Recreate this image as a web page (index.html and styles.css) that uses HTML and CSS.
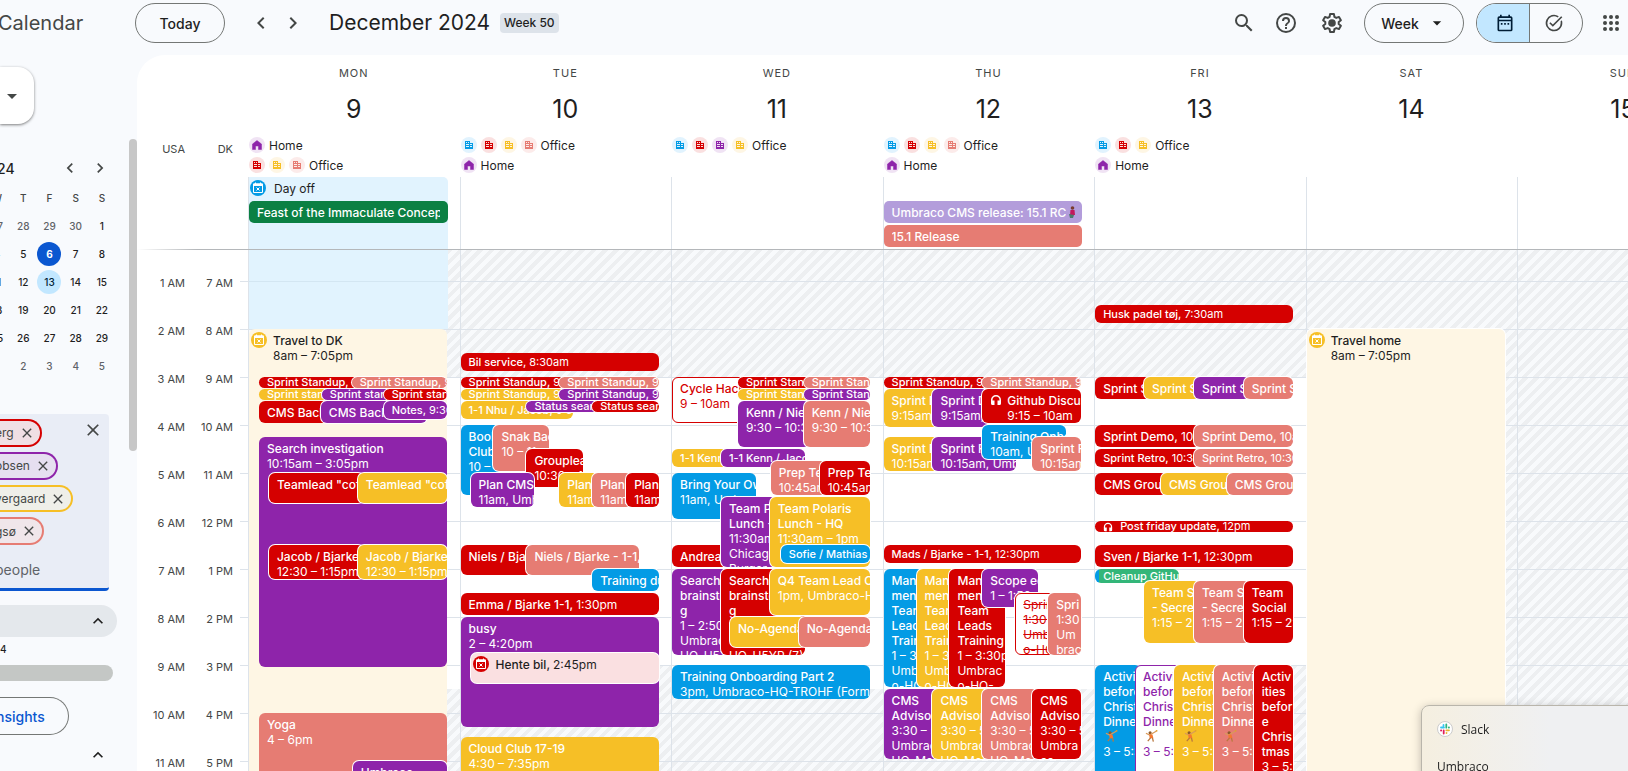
FILE: index.html
```html
<!DOCTYPE html>
<html lang="en">
<head>
<meta charset="utf-8">
<title>Calendar - December 2024</title>
<link rel="stylesheet" href="styles.css">
</head>
<body>
<svg class="defs" aria-hidden="true">
  <symbol id="office" viewBox="0 0 16 16"><path d="M4 4h5v2h3v6H4zM5 5v1h1V5zm2 0v1h1V5zM5 7v1h3V7zm0 2v1h3V9zm4-2v1h2V7zm0 2v1h2V9z" fill-rule="evenodd"/></symbol>
  <symbol id="home" viewBox="0 0 16 16"><path d="M8 3.500 3.500 7v5.500h3V9h3v3.500h3V7z" stroke="currentColor" stroke-width=".5" stroke-linejoin="round"/></symbol>
  <symbol id="away" viewBox="0 0 16 16"><circle cx="8" cy="8" r="8"/><path d="M3.500 4h9v8.500h-9zM5.500 2.500v2M10.500 2.500v2" fill="none" stroke="#fff"/><path d="M3.500 3.500h9V6h-9z" fill="#fff"/><path d="m6.500 7.500 3 3m0-3-3 3" stroke="#fff"/></symbol>
  <symbol id="left" viewBox="0 0 24 24"><path d="M15.410 7.410 14 6l-6 6 6 6 1.410-1.410L10.830 12z"/></symbol>
  <symbol id="right" viewBox="0 0 24 24"><path d="M10 6 8.590 7.410 13.170 12l-4.580 4.590L10 18l6-6z"/></symbol>
  <symbol id="up" viewBox="0 0 24 24"><path d="m12 8-6 6 1.410 1.410L12 10.830l4.590 4.580L18 14z"/></symbol>
  <symbol id="down" viewBox="0 0 24 24"><path d="m7 10 5 5 5-5z"/></symbol>
  <symbol id="close" viewBox="0 0 24 24"><path d="M19 6.410 17.590 5 12 10.590 6.410 5 5 6.410 10.590 12 5 17.590 6.410 19 12 13.410 17.590 19 19 17.590 13.410 12z"/></symbol>
  <symbol id="phones" viewBox="0 0 24 24"><path d="M12 2a10 10 0 0 0-10 10v7a3 3 0 0 0 3 3h4v-9H5v-1a7 7 0 0 1 14 0v1h-4v9h4a3 3 0 0 0 3-3v-7A10 10 0 0 0 12 2z"/></symbol>
  <symbol id="sport" viewBox="0 0 14 14"><circle cx="5.500" cy="4" r="1.700" fill="#8a5a2b"/><path d="M1 4.500 5 6.500 12 2.500" fill="none" stroke="#d99a5b" stroke-width="1.300"/><path d="M4.500 6h3.500l1 4H5z" fill="#f4772e"/><path d="M6 9.500 3 13M8 9.500l1 4" fill="none" stroke="#b9783f" stroke-width="1.400"/><circle cx="12.500" cy="2" r="1" fill="#e0a030"/></symbol>
</svg>

<header class="topbar">
  <span class="brand">Calendar</span>
  <button class="pill today">Today</button>
  <div class="pager">
    <button class="icon" aria-label="Previous week"><svg><use href="#left"/></svg></button>
    <button class="icon" aria-label="Next week"><svg><use href="#right"/></svg></button>
  </div>
  <h1>December 2024</h1>
  <span class="weekno">Week 50</span>
  <div class="tools">
    <button class="icon" aria-label="Search"><svg viewBox="0 0 24 24"><path d="M15.500 14h-.79l-.28-.27A6.470 6.470 0 0 0 16 9.500 6.500 6.500 0 1 0 9.500 16c1.610 0 3.090-.59 4.230-1.570l.27.28v.79l5 4.990L20.490 19zm-6 0a4.500 4.500 0 1 1 0-9 4.500 4.500 0 0 1 0 9z"/></svg></button>
    <button class="icon help" aria-label="Help"><svg viewBox="0 0 24 24"><path d="M11 18h2v-2h-2zm1-16a10 10 0 1 0 0 20 10 10 0 0 0 0-20zm0 18a8 8 0 1 1 0-16 8 8 0 0 1 0 16zm0-14a4 4 0 0 0-4 4h2a2 2 0 1 1 4 0c0 2-3 1.750-3 5h2c0-2.250 3-2.500 3-5a4 4 0 0 0-4-4z"/></svg></button>
    <button class="icon" aria-label="Settings"><svg viewBox="0 0 24 24"><path d="M10.100 3h3.800l.5 2.800 1.900 1.100 2.700-1 1.900 3.300-2.200 1.800v2l2.200 1.800-1.900 3.300-2.700-1-1.900 1.100-.5 2.800h-3.800l-.5-2.800-1.900-1.100-2.700 1-1.900-3.300L5.300 13v-2L3.100 9.200 5 5.900l2.700 1 1.900-1.100z" fill="none" stroke="#444746" stroke-width="2" stroke-linejoin="round"/><circle cx="12" cy="12" r="3.800"/></svg></button>
    <button class="pill view">Week<svg><use href="#down"/></svg></button>
    <div class="switch">
      <button class="on" aria-label="Calendar"><svg viewBox="0 0 24 24"><path d="M19 4h-1V2h-2v2H8V2H6v2H5a2 2 0 0 0-2 2v14a2 2 0 0 0 2 2h14a2 2 0 0 0 2-2V6a2 2 0 0 0-2-2zm0 16H5V10h14zm0-12H5V6h14zM7 12h2v2H7zm4 0h2v2h-2zm4 0h2v2h-2z"/></svg></button>
      <button aria-label="Tasks"><svg viewBox="0 0 24 24"><path d="M22 5.180 10.590 16.600l-4.240-4.240 1.410-1.410 2.830 2.830 10-10zM19.790 10.220c.13.570.21 1.170.21 1.780a8 8 0 1 1-8-8c1.580 0 3.040.46 4.280 1.250l1.440-1.440A10 10 0 1 0 22 12c0-1.190-.22-2.330-.6-3.390z"/></svg></button>
    </div>
    <button class="icon" aria-label="Apps"><svg viewBox="0 0 24 24"><circle cx="6" cy="6" r="2"/><circle cx="12" cy="6" r="2"/><circle cx="18" cy="6" r="2"/><circle cx="6" cy="12" r="2"/><circle cx="12" cy="12" r="2"/><circle cx="18" cy="12" r="2"/><circle cx="6" cy="18" r="2"/><circle cx="12" cy="18" r="2"/><circle cx="18" cy="18" r="2"/></svg></button>
  </div>
</header>

<main>
  <aside class="side">
    <div class="sidebody">
      <button class="create" aria-label="Create"><svg><use href="#down"/></svg></button>
      <div class="minihead"><b>24</b>
        <button class="icon" aria-label="Previous month"><svg><use href="#left"/></svg></button>
        <button class="icon" aria-label="Next month"><svg><use href="#right"/></svg></button>
      </div>
      <div class="mini"><table>
        <thead><tr><th>W</th><th>T</th><th>F</th><th>S</th><th>S</th></tr></thead>
        <tbody>
        <tr><td class="out">27</td><td class="out">28</td><td class="out">29</td><td class="out">30</td><td>1</td></tr>
        <tr><td>4</td><td>5</td><td><span class="now">6</span></td><td>7</td><td>8</td></tr>
        <tr><td>11</td><td>12</td><td><span class="sel">13</span></td><td>14</td><td>15</td></tr>
        <tr><td>18</td><td>19</td><td>20</td><td>21</td><td>22</td></tr>
        <tr><td>25</td><td>26</td><td>27</td><td>28</td><td>29</td></tr>
        <tr><td class="out">1</td><td class="out">2</td><td class="out">3</td><td class="out">4</td><td class="out">5</td></tr>
        </tbody>
      </table></div>
      <div class="people">
        <div class="chips">
          <span class="chip c-red">erg<button aria-label="Remove"><svg><use href="#close"/></svg></button></span>
          <span class="chip c-grape">obsen<button aria-label="Remove"><svg><use href="#close"/></svg></button></span>
          <span class="chip c-banana">vergaard<button aria-label="Remove"><svg><use href="#close"/></svg></button></span>
          <span class="chip c-flam">gsø<button aria-label="Remove"><svg><use href="#close"/></svg></button></span>
          <input type="text" aria-label="Search for people" placeholder="people">
        </div>
        <button class="icon clear" aria-label="Clear people"><svg><use href="#close"/></svg></button>
      </div>
      <button class="section shaded" aria-label="Collapse time insights"><svg><use href="#up"/></svg></button>
      <p class="range">4</p>
      <div class="meter"></div>
      <button class="insights">nsights</button>
      <button class="section" aria-label="Collapse my calendars"><svg><use href="#up"/></svg></button>
    </div>
    <div class="thumb"></div>
  </aside>

  <section class="panel">
    <div class="head">
      <div class="zones"><span>USA</span><span>DK</span></div>
      <div class="days"><div class="track">
        <div class="dayhead"><h2>MON</h2><strong>9</strong>
          <div class="places">
            <p><svg class="t-grape"><use href="#home"/></svg>Home</p>
            <p><svg class="t-red"><use href="#office"/></svg><svg class="t-banana"><use href="#office"/></svg><svg class="t-flam"><use href="#office"/></svg>Office</p>
          </div>
          <div class="allday"><div class="off"><svg><use href="#away"/></svg>Day off</div><button class="bar b-green"><span>Feast of the Immaculate Conception</span></button></div>
        </div>
        <div class="dayhead"><h2>TUE</h2><strong>10</strong>
          <div class="places">
            <p><svg class="t-blue"><use href="#office"/></svg><svg class="t-red"><use href="#office"/></svg><svg class="t-banana"><use href="#office"/></svg><svg class="t-flam"><use href="#office"/></svg>Office</p>
            <p><svg class="t-grape"><use href="#home"/></svg>Home</p>
          </div>
          <div class="allday"></div>
        </div>
        <div class="dayhead"><h2>WED</h2><strong>11</strong>
          <div class="places">
            <p><svg class="t-blue"><use href="#office"/></svg><svg class="t-red"><use href="#office"/></svg><svg class="t-grape"><use href="#office"/></svg><svg class="t-banana"><use href="#office"/></svg>Office</p>
          </div>
          <div class="allday"></div>
        </div>
        <div class="dayhead"><h2>THU</h2><strong>12</strong>
          <div class="places">
            <p><svg class="t-blue"><use href="#office"/></svg><svg class="t-red"><use href="#office"/></svg><svg class="t-banana"><use href="#office"/></svg><svg class="t-flam"><use href="#office"/></svg>Office</p>
            <p><svg class="t-grape"><use href="#home"/></svg>Home</p>
          </div>
          <div class="allday second"><button class="bar b-lav"><span>Umbraco CMS release: 15.1 RC</span><svg viewBox="0 0 8 12"><circle cx="4.500" cy="2" r="1.800" fill="#7a3b2e"/><path d="M2.500 4h4l.5 5H2z" fill="#c2185b"/><path d="M1 8l5 1-1 3H2z" fill="#4a7a6a"/></svg></button><button class="bar b-flam"><span>15.1 Release</span></button></div>
        </div>
        <div class="dayhead"><h2>FRI</h2><strong>13</strong>
          <div class="places">
            <p><svg class="t-blue"><use href="#office"/></svg><svg class="t-red"><use href="#office"/></svg><svg class="t-banana"><use href="#office"/></svg>Office</p>
            <p><svg class="t-grape"><use href="#home"/></svg>Home</p>
          </div>
          <div class="allday"></div>
        </div>
        <div class="dayhead"><h2>SAT</h2><strong>14</strong><div class="places"></div><div class="allday"></div></div>
        <div class="dayhead"><h2>SUN</h2><strong>15</strong><div class="places"></div><div class="allday"></div></div>
      </div></div>
    </div>

    <div class="body">
      <div class="hours">
        <ol><li>1 AM</li><li>2 AM</li><li>3 AM</li><li>4 AM</li><li>5 AM</li><li>6 AM</li><li>7 AM</li><li>8 AM</li><li>9 AM</li><li>10 AM</li><li>11 AM</li></ol>
        <ol><li>7 AM</li><li>8 AM</li><li>9 AM</li><li>10 AM</li><li>11 AM</li><li>12 PM</li><li>1 PM</li><li>2 PM</li><li>3 PM</li><li>4 PM</li><li>5 PM</li></ol>
      </div>
      <div class="days"><div class="track">

        <div class="day late"><div class="layer">
          <div class="offday"></div>
          <button class="ev away" style="--s:8;--d:11;--x:0;--w:198"><svg class="mark b"><use href="#away"/></svg><b>Travel to DK</b><span>8am – 7:05pm</span></button>
          <button class="ev xs red" style="--s:9;--x:10;--w:105"><b>Sprint Standup,</b> 9am</button>
          <button class="ev xs flam o" style="--s:9;--x:103;--w:95"><b>Sprint Standup,</b> 9am</button>
          <button class="ev xs banana" style="--s:9.25;--x:10;--w:70"><b>Sprint standup</b></button>
          <button class="ev xs grape o" style="--s:9.25;--x:73;--w:70"><b>Sprint standup</b></button>
          <button class="ev xs red o" style="--s:9.25;--x:135;--w:63"><b>Sprint standup</b></button>
          <button class="ev red" style="--s:9.5;--d:.5;--x:10;--w:70"><b>CMS Backlog</b></button>
          <button class="ev grape o" style="--s:9.5;--d:.5;--x:72;--w:106"><b>CMS Backlog</b></button>
          <button class="ev s grape o" style="--s:9.5;--x:135;--w:63"><b>Notes,</b> 9:30am</button>
          <button class="ev grape" style="--s:10.25;--d:4.8333;--x:10;--w:188"><b>Search investigation</b><span>10:15am – 3:05pm</span></button>
          <button class="ev red o" style="--s:11;--d:.6667;--x:20;--w:95"><b>Teamlead "coffee"</b></button>
          <button class="ev banana o" style="--s:11;--d:.6667;--x:109;--w:89"><b>Teamlead "coffee"</b></button>
          <button class="ev red o" style="--s:12.5;--d:.75;--x:20;--w:95"><b>Jacob / Bjarke</b><span>12:30 – 1:15pm</span></button>
          <button class="ev banana o" style="--s:12.5;--d:.75;--x:109;--w:89"><b>Jacob / Bjarke</b><span>12:30 – 1:15pm</span></button>
          <button class="ev flam" style="--s:16;--d:2;--x:10;--w:188"><b>Yoga</b><span>4 – 6pm</span></button>
          <button class="ev grape o" style="--s:17;--d:1;--x:104;--w:94"><b>Umbraco</b></button>
        </div></div>

        <div class="day"><div class="layer">
          <button class="ev s red" style="--s:8.5;--x:0;--w:199"><b>Bil service,</b> 8:30am</button>
          <button class="ev xs red" style="--s:9;--x:0;--w:105"><b>Sprint Standup,</b> 9am</button>
          <button class="ev xs flam o" style="--s:9;--x:99;--w:100"><b>Sprint Standup,</b> 9am</button>
          <button class="ev xs banana" style="--s:9.25;--x:0;--w:105"><b>Sprint Standup,</b> 9:15am</button>
          <button class="ev xs grape o" style="--s:9.25;--x:99;--w:100"><b>Sprint Standup,</b> 9:15am</button>
          <button class="ev s banana" style="--s:9.5;--x:0;--w:113"><b>1-1 Nhu / Jacob,</b> 9:30am</button>
          <button class="ev xs grape o" style="--s:9.5;--x:66;--w:72"><b>Status search</b></button>
          <button class="ev xs red o" style="--s:9.5;--x:132;--w:67"><b>Status search</b></button>
          <button class="ev blue" style="--s:10;--d:1.5;--x:0;--w:40"><b>Book<br>Club</b><span>10 – 11:30</span></button>
          <button class="ev flam o" style="--s:10;--d:1;--x:33;--w:56"><b>Snak Badge</b><span>10 – 11am</span></button>
          <button class="ev red o" style="--s:10.5;--d:.8333;--x:66;--w:57"><b>Grouplead</b><span>10:30 – 11:20</span></button>
          <button class="ev grape o" style="--s:11;--d:.75;--x:10;--w:64"><b>Plan CMS</b><span>11am, Umbraco</span></button>
          <button class="ev banana o" style="--s:11;--d:.75;--x:99;--w:40"><b>Plan CMS</b><span>11am, Umb</span></button>
          <button class="ev flam o" style="--s:11;--d:.75;--x:132;--w:40"><b>Plan CMS</b><span>11am, Umb</span></button>
          <button class="ev red o" style="--s:11;--d:.75;--x:166;--w:33"><b>Plan CMS</b><span>11am, Umb</span></button>
          <button class="ev red" style="--s:12.5;--d:.6667;--x:0;--w:72"><b>Niels / Bjarke</b></button>
          <button class="ev flam o" style="--s:12.5;--d:.6667;--x:66;--w:113"><b>Niels / Bjarke - 1-1,</b></button>
          <button class="ev blue o" style="--s:13;--d:.5;--x:132;--w:67"><b>Training during</b></button>
          <button class="ev red line" style="--s:13.5;--d:.5;--x:0;--w:199"><b>Emma / Bjarke 1-1,</b> 1:30pm</button>
          <button class="ev grape" style="--s:14;--d:2.3333;--x:0;--w:199"><b>busy</b><span>2 – 4:20pm</span></button>
          <button class="ev errand line o" style="--s:14.75;--d:.6667;--x:10;--w:189"><svg class="mark r"><use href="#away"/></svg><b>Hente bil,</b> 2:45pm</button>
          <button class="ev banana" style="--s:16.5;--d:3;--x:0;--w:199"><b>Cloud Club 17-19</b><span>4:30 – 7:35pm</span></button>
        </div></div>

        <div class="day late"><div class="layer">
          <button class="ev ghost-red" style="--s:9;--d:1;--x:0;--w:80"><b>Cycle Hack</b><span>9 – 10am</span></button>
          <button class="ev xs red o" style="--s:9;--x:66;--w:72"><b>Sprint Standup</b></button>
          <button class="ev xs flam o" style="--s:9;--x:132;--w:66"><b>Sprint Standup</b></button>
          <button class="ev xs banana o" style="--s:9.25;--x:66;--w:72"><b>Sprint Standup</b></button>
          <button class="ev xs grape o" style="--s:9.25;--x:132;--w:66"><b>Sprint Standup</b></button>
          <button class="ev grape o" style="--s:9.5;--d:1;--x:66;--w:72"><b>Kenn / Niels</b><span>9:30 – 10:30</span></button>
          <button class="ev flam o" style="--s:9.5;--d:1;--x:132;--w:66"><b>Kenn / Niels</b><span>9:30 – 10:30</span></button>
          <button class="ev s banana" style="--s:10.5;--x:0;--w:56"><b>1-1 Kenn</b></button>
          <button class="ev s grape o" style="--s:10.5;--x:49;--w:84"><b>1-1 Kenn / Jacob</b></button>
          <button class="ev blue" style="--s:11;--d:1;--x:0;--w:84"><b>Bring Your Own</b><span>11am, Umbraco</span></button>
          <button class="ev flam o" style="--s:10.75;--d:.75;--x:99;--w:56"><b>Prep Team</b><span>10:45am</span></button>
          <button class="ev red o" style="--s:10.75;--d:.75;--x:148;--w:50"><b>Prep Team</b><span>10:45am</span></button>
          <button class="ev red" style="--s:12.5;--d:.5;--x:0;--w:56"><b>Andreas</b></button>
          <button class="ev grape o" style="--s:11.5;--d:1.5;--x:49;--w:56"><b>Team Polaris<br>Lunch - HQ</b><span>11:30am<br>Chicago<br>Burger</span></button>
          <button class="ev banana o" style="--s:11.5;--d:1.5;--x:98;--w:100"><b>Team Polaris<br>Lunch - HQ</b><span>11:30am – 1pm</span></button>
          <button class="ev s blue o" style="--s:12.5;--x:109;--w:89"><b>Sofie / Mathias</b></button>
          <button class="ev grape" style="--s:13;--d:1.8333;--x:0;--w:56"><b>Search<br>brainstormin<br>g</b><span>1 – 2:50pm<br>Umbraco-<br>HQ-U5YP</span></button>
          <button class="ev red o" style="--s:13;--d:1.8333;--x:49;--w:84"><b>Search<br>brainstormin<br>g</b><span>1 – 2:50pm<br>Umbraco-<br>HQ-U5YP (7)</span></button>
          <button class="ev banana o" style="--s:13;--d:1;--x:98;--w:100"><b>Q4 Team Lead Catch</b><span>1pm, Umbraco-HQ</span></button>
          <button class="ev banana o" style="--s:14;--d:.6667;--x:58;--w:76"><b>No-Agenda</b></button>
          <button class="ev flam o" style="--s:14;--d:.6667;--x:127;--w:71"><b>No-Agenda</b></button>
          <button class="ev blue" style="--s:15;--d:.75;--x:0;--w:198"><b>Training Onboarding Part 2</b><span>3pm, Umbraco-HQ-TROHF (Formerly)</span></button>
        </div></div>

        <div class="day late"><div class="layer">
          <button class="ev xs red" style="--s:9;--x:0;--w:105"><b>Sprint Standup,</b> 9am</button>
          <button class="ev xs flam o" style="--s:9;--x:99;--w:99"><b>Sprint Standup,</b> 9am</button>
          <button class="ev banana" style="--s:9.25;--d:.8333;--x:0;--w:56"><b>Sprint Demo</b><span>9:15am, Umb</span></button>
          <button class="ev grape o" style="--s:9.25;--d:.8333;--x:49;--w:56"><b>Sprint Demo</b><span>9:15am, Umb</span></button>
          <button class="ev red o indent" style="--s:9.25;--d:.75;--x:99;--w:99"><svg class="phones"><use href="#phones"/></svg><b>Github Discussion</b><span>9:15 – 10am</span></button>
          <button class="ev banana" style="--s:10.25;--d:.75;--x:0;--w:56"><b>Sprint Retro</b><span>10:15am, Umb</span></button>
          <button class="ev grape o" style="--s:10.25;--d:.75;--x:49;--w:84"><b>Sprint Retro</b><span>10:15am, Umbraco</span></button>
          <button class="ev blue o" style="--s:10;--d:.75;--x:99;--w:84"><b>Training Onboarding</b><span>10am, Umbraco</span></button>
          <button class="ev flam o" style="--s:10.25;--d:.75;--x:149;--w:49"><b>Sprint Retro</b><span>10:15am, Umb</span></button>
          <button class="ev s red" style="--s:12.5;--x:0;--w:198"><b>Mads / Bjarke - 1-1,</b> 12:30pm</button>
          <button class="ev blue" style="--s:13;--d:2.5;--x:0;--w:40"><b>Manage<br>ment<br>Team<br>Leads<br>Training</b><span>1 – 3:30pm<br>Umbrac<br>o-HQ-</span></button>
          <button class="ev banana o" style="--s:13;--d:2.5;--x:33;--w:40"><b>Manage<br>ment<br>Team<br>Leads<br>Training</b><span>1 – 3:30pm<br>Umbrac<br>o-HQ-</span></button>
          <button class="ev red o" style="--s:13;--d:2.5;--x:66;--w:56"><b>Manage<br>ment<br>Team<br>Leads<br>Training</b><span>1 – 3:30pm<br>Umbrac<br>o-HQ-</span></button>
          <button class="ev grape o" style="--s:13;--d:.8333;--x:99;--w:56"><b>Scope edit</b><span>1 – 1:50pm</span></button>
          <button class="ev ghost-red struck o" style="--s:13.5;--d:1.3333;--x:132;--w:40"><span>Sprint<br>1:30 –<br>Umbra<br>o-HQ-</span></button>
          <button class="ev flam o" style="--s:13.5;--d:1.3333;--x:165;--w:33"><b>Spri</b><span>1:30<br>Um<br>brac</span></button>
          <button class="ev grape" style="--s:15.5;--d:1.5;--x:0;--w:56"><b>CMS<br>Advisory</b><span>3:30 – 5pm<br>Umbraco-<br>HQ-Meet</span></button>
          <button class="ev banana o" style="--s:15.5;--d:1.5;--x:49;--w:56"><b>CMS<br>Advisory</b><span>3:30 – 5pm<br>Umbraco-<br>HQ-Meet</span></button>
          <button class="ev flam o" style="--s:15.5;--d:1.5;--x:99;--w:56"><b>CMS<br>Advisory</b><span>3:30 – 5pm<br>Umbraco-<br>HQ-Meet</span></button>
          <button class="ev red o" style="--s:15.5;--d:1.5;--x:149;--w:49"><b>CMS<br>Adviso</b><span>3:30 – 5pm<br>Umbra<br>co-</span></button>
        </div></div>

        <div class="day"><div class="layer">
          <button class="ev s red" style="--s:7.5;--x:0;--w:198"><b>Husk padel tøj,</b> 7:30am</button>
          <button class="ev red" style="--s:9;--d:.5;--x:0;--w:56"><b>Sprint Standup</b></button>
          <button class="ev banana o" style="--s:9;--d:.5;--x:49;--w:56"><b>Sprint Standup</b></button>
          <button class="ev grape o" style="--s:9;--d:.5;--x:99;--w:56"><b>Sprint Standup</b></button>
          <button class="ev flam o" style="--s:9;--d:.5;--x:149;--w:49"><b>Sprint Standup</b></button>
          <button class="ev red line" style="--s:10;--d:.5;--x:0;--w:105"><b>Sprint Demo,</b> 10am</button>
          <button class="ev flam line o" style="--s:10;--d:.5;--x:99;--w:99"><b>Sprint Demo,</b> 10am</button>
          <button class="ev s red" style="--s:10.5;--x:0;--w:105"><b>Sprint Retro,</b> 10:30am</button>
          <button class="ev s flam o" style="--s:10.5;--x:99;--w:99"><b>Sprint Retro,</b> 10:30am</button>
          <button class="ev red" style="--s:11;--d:.5;--x:0;--w:72"><b>CMS Group</b></button>
          <button class="ev banana o" style="--s:11;--d:.5;--x:66;--w:72"><b>CMS Group</b></button>
          <button class="ev flam o" style="--s:11;--d:.5;--x:132;--w:66"><b>CMS Group</b></button>
          <button class="ev xs red" style="--s:12;--x:0;--w:198"><svg class="phones"><use href="#phones"/></svg><b>Post friday update,</b> 12pm</button>
          <button class="ev red line" style="--s:12.5;--d:.5;--x:0;--w:198"><b>Sven / Bjarke 1-1,</b> 12:30pm</button>
          <button class="ev task" style="--s:13;--x:0;--w:84"><b>Cleanup GitHub</b></button>
          <button class="ev banana o" style="--s:13.25;--d:1.3333;--x:49;--w:56"><b>Team Social<br>- Secret</b><span>1:15 – 2:35</span></button>
          <button class="ev flam o" style="--s:13.25;--d:1.3333;--x:99;--w:56"><b>Team Social<br>- Secret</b><span>1:15 – 2:35</span></button>
          <button class="ev red o" style="--s:13.25;--d:1.3333;--x:149;--w:49"><b>Team<br>Social</b><span>1:15 – 2:35</span></button>
          <button class="ev blue" style="--s:15;--d:3;--x:0;--w:46"><b>Activities<br>before<br>Christmas<br>Dinner<br><svg class="sport"><use href="#sport"/></svg></b><span>3 – 5:30</span></button>
          <button class="ev ghost-grape" style="--s:15;--d:3;--x:40;--w:46"><b>Activities<br>before<br>Christmas<br>Dinner<br><svg class="sport"><use href="#sport"/></svg></b><span>3 – 5:30</span></button>
          <button class="ev banana o" style="--s:15;--d:3;--x:79;--w:46"><b>Activities<br>before<br>Christmas<br>Dinner<br><svg class="sport"><use href="#sport"/></svg></b><span>3 – 5:30</span></button>
          <button class="ev flam o" style="--s:15;--d:3;--x:119;--w:46"><b>Activities<br>before<br>Christmas<br>Dinner<br><svg class="sport"><use href="#sport"/></svg></b><span>3 – 5:30</span></button>
          <button class="ev red o" style="--s:15;--d:3;--x:159;--w:39"><b>Activ<br>ities<br>befor<br>e<br>Chris<br>tmas</b><span>3 – 5:30</span></button>
        </div></div>

        <div class="day closed"><div class="layer">
          <button class="ev away o" style="--s:8;--d:11;--x:0;--w:199"><svg class="mark b"><use href="#away"/></svg><b>Travel home</b><span>8am – 7:05pm</span></button>
        </div></div>
        <div class="day closed"><div class="layer"></div></div>
      </div></div>
    </div>
  </section>
</main>

<div class="toast" role="status">
  <div class="app"><svg viewBox="0 0 16 16"><circle cx="8" cy="8" r="7.500" fill="#fff" stroke="#ccc"/><path d="M4 6.500h3M6.500 4v1" stroke="#36c5f0" stroke-width="1.800" stroke-linecap="round"/><path d="M9.300 3.500v3.200M11.800 6.500h.2" stroke="#2eb67d" stroke-width="1.800" stroke-linecap="round"/><path d="M9.300 9.300H12M9.500 11.800v.2" stroke="#ecb22e" stroke-width="1.800" stroke-linecap="round"/><path d="M6.700 9.300v3.200M4.200 9.500H4" stroke="#e01e5a" stroke-width="1.800" stroke-linecap="round"/></svg>Slack</div>
  <p>Umbraco</p>
</div>
</body>
</html>
```
FILE: styles.css
```css
:root {
  --red: #d50000;
  --flam: #e67c73;
  --banana: #f6bf26;
  --grape: #8e24aa;
  --blue: #039be5;
  --line: #dde3ea;
  --ink: #1f1f1f;
  --soft: #444746;
}
* { box-sizing: border-box; }
body {
  margin: 0;
  height: 100vh;
  overflow: hidden;
  display: flex;
  flex-direction: column;
  background: #f8fafd;
  color: var(--ink);
  font: 12px/15px Inter, Roboto, sans-serif;
}
h1, h2, p, ol { margin: 0; padding: 0; font-weight: 400; list-style: none; }
button, input { font: inherit; color: inherit; border: 0; padding: 0; background: none; }
b { font-weight: 500; }
svg { fill: currentColor; flex: none; }
.defs { position: absolute; width: 0; height: 0; }

/* Top bar */
.topbar { display: flex; align-items: center; height: 55px; padding-bottom: 9px; flex: none; }
.brand { width: 137px; margin-left: -2px; font-size: 20px; line-height: 28px; color: var(--soft); }
.pill { height: 40px; border: 1px solid #747775; border-radius: 20px; font-size: 14px; font-weight: 500; }
.today { width: 90px; margin-right: 20px; }
.pager { display: flex; }
.icon { display: flex; align-items: center; justify-content: center; color: var(--soft); }
.icon svg { width: 24px; height: 24px; }
.pager .icon { width: 32px; height: 32px; }
h1 { margin-left: 20px; width: 159px; white-space: nowrap; font-size: 21px; line-height: 28px; }
.weekno { margin-left: 12px; padding: 0 4px; background: #dde3ea; border-radius: 4px; line-height: 20px; font-weight: 500; }
.tools { margin-left: auto; display: flex; align-items: center; padding-right: 5px; }
.tools .icon { width: 24px; }
.tools > .icon { margin-right: 18px; }
.tools > .help { margin-right: 22px; }
.tools > .icon:last-child { margin: 0 0 0 16px; }
.view { display: flex; align-items: center; justify-content: center; gap: 8px; width: 100px; margin: 0 12px 0 2px; }
.view svg { width: 20px; height: 20px; }
.switch { display: flex; width: 107px; height: 40px; border: 1px solid #747775; border-radius: 20px; overflow: hidden; color: var(--soft); }
.switch button { flex: 1; display: flex; align-items: center; justify-content: center; padding-right: 4px; }
.switch svg { width: 20px; height: 20px; }
.switch .on { padding: 0 0 0 4px; background: #c2e7ff; border-right: 1px solid #747775; color: #001d35; }

main { flex: 1; min-height: 0; display: flex; }

/* Sidebar */
.side { width: 137px; flex: none; display: flex; overflow: hidden; }
.sidebody { width: 129px; flex: none; display: flex; flex-direction: column; align-items: flex-start; }
.thumb { width: 8px; height: 312px; margin-top: 84px; border-radius: 4px; background: #c7c7c7; }
.create { width: 34px; height: 57px; margin-top: 12px; border-radius: 0 16px 16px 0; background: #fff; box-shadow: 0 1px 3px rgba(0,0,0,.5); color: var(--soft); display: flex; align-items: center; }
.create svg { width: 24px; height: 24px; }
.minihead { display: flex; align-items: center; width: 115px; height: 30px; margin-top: 29px; font-size: 14px; }
.minihead b { flex: 1; margin-left: -3px; }
.minihead .icon { width: 30px; }
.minihead svg { width: 20px; height: 20px; }
.mini { width: 115px; display: flex; justify-content: flex-end; }
.mini table { flex: none; width: 131px; table-layout: fixed; border-collapse: collapse; font-size: 10px; line-height: 24px; text-align: center; font-weight: 500; }
.mini th, .mini td { padding: 2px 0; }
.mini th { font-weight: 500; color: var(--soft); padding: 3px 0 2px; }
.mini .out { color: #5f6368; }
.mini span { display: block; width: 24px; margin: 0 auto; border-radius: 12px; }
.now { background: #0b57d0; color: #fff; font-weight: 700; }
.sel { background: #c2e7ff; color: #001d35; }
.people { display: flex; width: 109px; height: 177px; margin-top: 34px; background: #e9edf6; border-bottom: 3px solid #0b57d0; border-radius: 0 4px 4px 0; }
.chips { flex: 1; min-width: 0; display: flex; flex-direction: column; align-items: flex-start; gap: 5px; margin-left: -5px; padding-top: 5px; }
.chip { display: flex; align-items: center; gap: 5px; height: 28px; padding-right: 5px; border: 2px solid; border-left: 0; border-radius: 0 14px 14px 0; font-size: 12px; }
.chip button { display: flex; color: var(--soft); }
.chip svg { width: 16px; height: 16px; }
.chip { color: var(--soft); }
.c-red { border-color: var(--red); background: #f0dfe4; }
.c-grape { border-color: var(--grape); background: #e6dff0; }
.c-banana { border-color: var(--banana); background: #efefe9; }
.c-flam { border-color: var(--flam); background: #f0e6ea; }
.people input { width: 60px; height: 38px; font-size: 14px; }
.people input::placeholder { color: #5f6368; opacity: 1; }
.clear { flex: none; align-self: flex-start; margin: 6px 6px 0 0; width: 20px; }
.clear svg { width: 20px; height: 20px; }
.section { display: flex; align-items: center; justify-content: flex-end; width: 117px; height: 32px; padding-right: 9px; border-radius: 0 16px 16px 0; margin-top: 4px; }
.section svg { width: 20px; height: 20px; }
.shaded { margin-top: 14px; background: #e4e8ec; }
.range { margin-top: 5px; font-size: 10px; font-weight: 500; }
.meter { width: 113px; height: 16px; margin-top: 8px; border-radius: 0 8px 8px 0; background: #c4c7c5; }
.insights { width: 69px; height: 38px; margin-top: 16px; border: 1px solid #747775; border-left: 0; border-radius: 0 19px 19px 0; color: #0b57d0; font-size: 14px; font-weight: 500; text-align: left; text-indent: -4px; }

/* Week panel */
.panel { flex: 1; min-width: 0; display: flex; flex-direction: column; background: #fff; border-radius: 28px 0 0 0; }
.head, .body { display: flex; }
.head { position: relative; flex: none; height: 195px; }
.head::after { content: ""; position: absolute; left: 0; right: 0; bottom: 0; height: 1px; background: linear-gradient(to right, transparent, #b4b7ba 60px); }
.body { flex: 1; min-height: 0; overflow: hidden; }
.zones, .hours { width: 111px; flex: none; display: flex; }
.zones { align-items: flex-start; padding-top: 87px; color: var(--soft); font-size: 11px; }
.zones span { width: 48px; text-align: right; }
.days { flex: 1; min-width: 0; overflow: hidden; }
.track { display: grid; grid-template-columns: repeat(7, 1fr); width: 107.3%; height: 100%; }
.dayhead { min-width: 0; display: flex; flex-direction: column; text-align: center; padding-top: 11px; }
h2 { font-size: 11px; line-height: 14px; letter-spacing: 1px; color: var(--soft); }
strong { margin-top: 11px; font-size: 25px; line-height: 36px; font-weight: 400; }
.places { height: 42px; margin-top: 8px; }
.places p { display: flex; align-items: center; gap: 4px; height: 20px; padding-left: 1px; font-size: 12px; }
.places svg { width: 16px; height: 16px; border-radius: 8px; }
.t-blue { color: var(--blue); background: #e1f3fe; }
.t-red { color: var(--red); background: #fae0e0; }
.t-banana { color: var(--banana); background: #fef6e4; }
.t-flam { color: var(--flam); background: #fcebea; }
.t-grape { color: var(--grape); background: #f0e3f4; }
.allday { flex: 1; display: flex; flex-direction: column; gap: 2px; padding-right: 12px; border-left: 1px solid var(--line); }
.second { padding-top: 24px; }
.off { display: flex; align-items: center; gap: 8px; height: 72px; margin-bottom: -50px; padding: 0 1px 50px; background: #e1f3fe; border-radius: 0 5px 0 0; }
.off svg { width: 16px; height: 16px; color: var(--blue); }
.bar { display: flex; align-items: center; gap: 2px; height: 22px; padding: 0 8px; border-radius: 5px; color: #fff; font-weight: 500; white-space: nowrap; flex: none; }
.bar span { overflow: hidden; }
.bar svg { width: 8px; height: 12px; }
.b-green { background: #0b8043; }
.b-lav { background: #b39ddb; padding-right: 4px; }
.b-flam { background: var(--flam); }

/* Hour grid */
.hours { color: var(--soft); font-size: 11px; line-height: 48px; text-align: right; background: linear-gradient(var(--line) 1px, transparent 1px) right 31px / 8px 48px repeat-y; }
.hours ol { width: 48px; padding-top: 9px; }
.day {
  --hatch: repeating-linear-gradient(135deg, #f8fafc 0 4px, #edeff1 4px 8px);
  --end: 415px;
  min-width: 0;
  padding-right: 12px;
  border-left: 1px solid var(--line);
  background:
    linear-gradient(var(--line) 1px, transparent 1px) 0 31px / 100% 48px,
    var(--hatch) 0 0 / 100% 127px no-repeat,
    var(--hatch) 0 var(--end) / 100% 1200px no-repeat;
}
.late { --end: 439px; }
.closed { --end: 127px; }
.layer { position: relative; height: 100%; }
.offday { height: 79px; background: linear-gradient(#d3e6f2 1px, #e1f3fe 1px) 0 31px / 100% 48px; }
.ev {
  position: absolute;
  top: calc(31px + (var(--s) - 7) * 48px);
  left: calc(var(--x) / 199 * 100%);
  width: calc(var(--w) / 199 * 100%);
  height: calc(var(--d) * 48px - 2px);
  display: flex;
  flex-direction: column;
  align-items: flex-start;
  padding: 4px 0 0 8px;
  overflow: hidden;
  border-radius: 6px;
  color: #fff;
  text-align: left;
  white-space: nowrap;
}
.s, .xs, .line { flex-direction: row; gap: 3px; }
.s, .xs { padding-top: 0; align-items: center; font-size: 11px; }
.s { height: 18px; }
.xs { height: 11px; }
.o { box-shadow: 0 0 0 1px #fff; }
.red { background: var(--red); }
.flam { background: var(--flam); }
.banana { background: var(--banana); }
.grape { background: var(--grape); }
.blue { background: var(--blue); }
.ghost-red { background: #fff; border: 1px solid var(--red); color: var(--red); padding: 3px 0 0 7px; }
.ghost-grape { background: #fff; border: 1px solid var(--grape); color: var(--grape); padding: 3px 0 0 7px; }
.struck { text-decoration: line-through; }
.task { height: 14px; padding-top: 0; font-size: 11px; background: linear-gradient(to right, var(--blue) 4px, #33b679 4px); }
.away { background: #fef6e4; color: var(--ink); padding: 4px 0 0 24px; }
.errand { background: #fae0e1; color: var(--ink); padding: 4px 0 0 25px; }
.mark { position: absolute; left: 2px; top: 3px; width: 16px; height: 16px; }
.mark.b { color: var(--banana); }
.mark.r { color: var(--red); }
.indent { padding-left: 25px; }
.phones { width: 10px; height: 10px; margin-right: 4px; }
.indent .phones { position: absolute; left: 8px; top: 5px; width: 12px; height: 12px; }
.sport { display: inline-block; width: 13px; height: 13px; margin-left: 2px; vertical-align: top; }

/* Notification */
.toast { position: fixed; right: -8px; bottom: -8px; width: 215px; height: 74px; padding: 15px; border: 1px solid #b9b5ab; border-radius: 8px; background: linear-gradient(to right, #f5efe0, #eff0f2 60%); box-shadow: 0 2px 10px rgba(0,0,0,.25); font-family: "Open Sans", "Noto Sans", sans-serif; }
.app { display: flex; align-items: center; gap: 8px; height: 16px; }
.app svg { width: 16px; height: 16px; fill: none; }
.toast p { margin-top: 22px; }
```
